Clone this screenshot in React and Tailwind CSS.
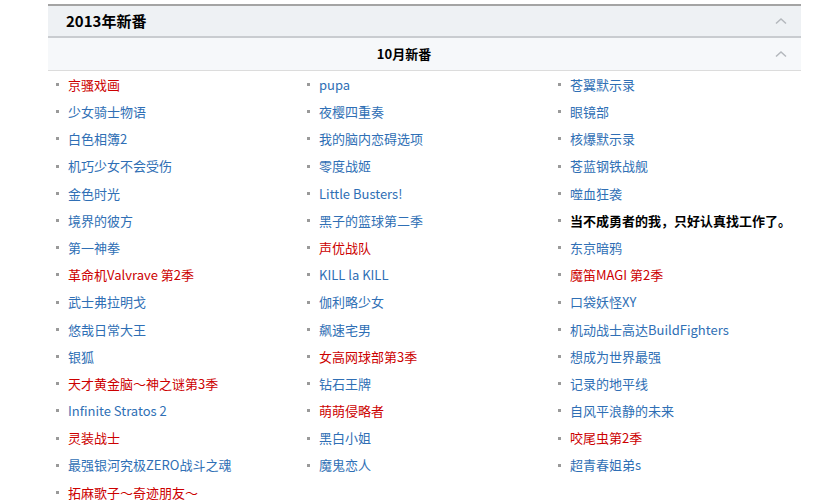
const col1 = [
  ["京骚戏画", "red"],
  ["少女骑士物语"],
  ["白色相簿2"],
  ["机巧少女不会受伤"],
  ["金色时光"],
  ["境界的彼方"],
  ["第一神拳"],
  ["革命机Valvrave 第2季", "red"],
  ["武士弗拉明戈"],
  ["悠哉日常大王"],
  ["银狐"],
  ["天才黄金脑～神之谜第3季", "red"],
  ["Infinite Stratos 2"],
  ["灵装战士", "red"],
  ["最强银河究极ZERO战斗之魂"],
  ["拓麻歌子～奇迹朋友～", "red"],
]

const col2 = [
  ["pupa"],
  ["夜樱四重奏"],
  ["我的脑内恋碍选项"],
  ["零度战姬"],
  ["Little Busters!"],
  ["黑子的篮球第二季"],
  ["声优战队", "red"],
  ["KILL la KILL"],
  ["伽利略少女"],
  ["飙速宅男"],
  ["女高网球部第3季", "red"],
  ["钻石王牌"],
  ["萌萌侵略者", "red"],
  ["黑白小姐"],
  ["魔鬼恋人"],
]

const col3 = [
  ["苍翼默示录"],
  ["眼镜部"],
  ["核爆默示录"],
  ["苍蓝钢铁战舰"],
  ["噬血狂袭"],
  ["当不成勇者的我，只好认真找工作了。", "bold"],
  ["东京暗鸦"],
  ["魔笛MAGI 第2季", "red"],
  ["口袋妖怪XY"],
  ["机动战士高达BuildFighters"],
  ["想成为世界最强"],
  ["记录的地平线"],
  ["自风平浪静的未来"],
  ["咬尾虫第2季", "red"],
  ["超青春姐弟s"],
]

const colorOf = {
  red: "text-[#cc0000]",
  bold: "text-black font-bold",
}

function Chevron() {
  return (
    <svg width="12" height="8" viewBox="0 0 12 8" className="text-[#b4b8bd]">
      <polyline
        points="1,6.5 6,2 11,6.5"
        fill="none"
        stroke="currentColor"
        strokeWidth="1.5"
      />
    </svg>
  )
}

function Item({ item }) {
  if (!item) return <div className="h-[27.2px]" />
  const [title, kind] = item
  return (
    <div className="flex items-center h-[27.2px] pl-2">
      <span className="w-[3px] h-[3px] bg-[#9a9a9a] mr-[9px] shrink-0" />
      <a
        href="#"
        className={`whitespace-nowrap ${colorOf[kind] || "text-[#2f6fb5]"}`}
      >
        {title}
      </a>
    </div>
  )
}

export default function App() {
  const rows = col1.map((item, i) => [item, col2[i], col3[i]])

  return (
    <div
      className="bg-white min-h-[504px] pt-1 text-[13px]"
      style={{ fontFamily: '"Noto Sans CJK SC", "Noto Sans", sans-serif' }}
    >
      <div className="ml-12 w-[753px]">
        <div className="flex items-center justify-between h-[34px] bg-[#eef1f4] border-t-2 border-[#a4a4a4] border-b-2 border-b-[#c9ccd0] pl-[18px] pr-[14px]">
          <h2 className="text-[15px] font-bold text-black">2013年新番</h2>
          <Chevron />
        </div>
        <div className="flex items-center h-[33px] bg-[#f6f8fa] border-b border-[#dcdcdc] pr-[14px]">
          <h3 className="flex-1 text-center font-bold text-black mr-[15px]">
            10月新番
          </h3>
          <Chevron />
        </div>
        <div className="grid grid-cols-3">
          {rows.map((row, i) =>
            row.map((item, j) => <Item key={`${i}-${j}`} item={item} />)
          )}
        </div>
      </div>
    </div>
  )
}
